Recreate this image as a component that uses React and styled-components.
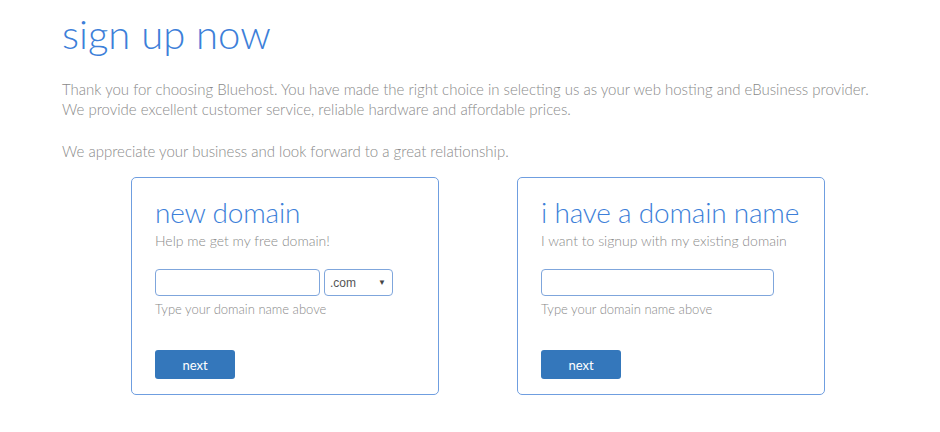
import styled, { createGlobalStyle } from "styled-components";

const GlobalStyle = createGlobalStyle`
  body {
    margin: 0;
    background: #fff;
    font-family: Lato, "Open Sans", sans-serif;
    font-weight: 300;
  }
`;

const Page = styled.div`
  padding: 8px 0 0 62px;
  width: 940px;
  height: 432px;
  box-sizing: border-box;
  overflow: hidden;
`;

const Title = styled.h1`
  margin: 0;
  font-size: 40px;
  font-weight: 300;
  line-height: 52px;
  color: #3d7fd9;
`;

const Intro = styled.p`
  margin: ${(p) => (p.$first ? "19px" : "22px")} 0 0;
  font-size: 15px;
  line-height: 20px;
  color: #8a8a8a;
`;

const CardRow = styled.div`
  display: flex;
  gap: 78px;
  margin: 16px 0 0 69px;
`;

const Card = styled.div`
  width: 308px;
  height: 218px;
  box-sizing: border-box;
  border: 1px solid #6f9ee0;
  border-radius: 5px;
  padding: 16px 23px 0;
  display: flex;
  flex-direction: column;
`;

const CardTitle = styled.h2`
  margin: 0;
  font-size: 28px;
  font-weight: 300;
  line-height: 36px;
  color: #3d7fd9;
  white-space: nowrap;
  letter-spacing: -0.2px;
`;

const CardSub = styled.div`
  margin-top: 1px;
  font-size: 14px;
  line-height: 20px;
  color: #8a8a8a;
  white-space: nowrap;
`;

const Fields = styled.div`
  display: flex;
  gap: 4px;
  margin-top: 18px;
`;

const TextInput = styled.input`
  width: ${(p) => p.$width}px;
  height: 27px;
  box-sizing: border-box;
  border: 1px solid #7fa6dc;
  border-radius: 4px;
  outline: none;
  padding: 0 6px;
  font-family: inherit;
`;

const Select = styled.div`
  width: 69px;
  height: 27px;
  box-sizing: border-box;
  border: 1px solid #7fa6dc;
  border-radius: 4px;
  display: flex;
  align-items: center;
  justify-content: space-between;
  padding: 0 6px 0 5px;
  font-family: "Liberation Sans", Arial, sans-serif;
  font-size: 12px;
  color: #555;
  font-weight: 400;

  span:last-child {
    font-size: 8px;
    color: #444;
  }
`;

const Hint = styled.div`
  font-size: 13px;
  line-height: 18px;
  color: #8a8a8a;
  margin-top: 4px;
`;

const NextButton = styled.button`
  margin-top: 32px;
  width: 80px;
  height: 29px;
  border: none;
  border-radius: 3px;
  background: #3477bb;
  color: #fff;
  font-family: inherit;
  font-weight: 400;
  font-size: 13px;
  cursor: pointer;
  padding: 0;
`;

export default function App() {
  return (
    <Page>
      <GlobalStyle />
      <Title>sign up now</Title>
      <Intro $first>
        Thank you for choosing Bluehost. You have made the right choice in
        selecting us as your web hosting and eBusiness provider.
        <br />
        We provide excellent customer service, reliable hardware and affordable
        prices.
      </Intro>
      <Intro>
        We appreciate your business and look forward to a great relationship.
      </Intro>
      <CardRow>
        <Card>
          <CardTitle>new domain</CardTitle>
          <CardSub>Help me get my free domain!</CardSub>
          <Fields>
            <TextInput $width={165} />
            <Select>
              <span>.com</span>
              <span>▼</span>
            </Select>
          </Fields>
          <Hint>Type your domain name above</Hint>
          <div>
            <NextButton>next</NextButton>
          </div>
        </Card>
        <Card>
          <CardTitle>i have a domain name</CardTitle>
          <CardSub>I want to signup with my existing domain</CardSub>
          <Fields>
            <TextInput $width={233} />
          </Fields>
          <Hint>Type your domain name above</Hint>
          <div>
            <NextButton>next</NextButton>
          </div>
        </Card>
      </CardRow>
    </Page>
  );
}
